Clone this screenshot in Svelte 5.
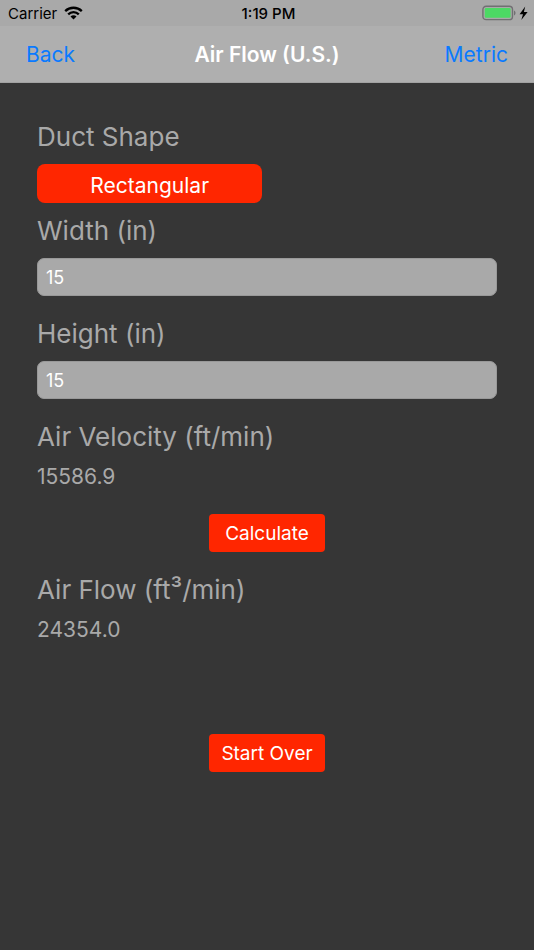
<script>
    const shapes = ['Rectangular', 'Circular'];

    let shape = 'Rectangular';
    let width = '15';
    let height = '15';
    let velocity = '15586.9';
    let flow = '24354.0';

    function toggleShape() {
        shape = shapes[(shapes.indexOf(shape) + 1) % shapes.length];
    }

    function calculate() {
        let area = (Number(width) * Number(height)) / 144;
        if (shape === 'Circular') {
            area = area * Math.PI / 4;
        }
        flow = (Number(velocity) * area).toFixed(1);
    }

    function startOver() {
        shape = shapes[0];
        width = '';
        height = '';
        velocity = '0.0';
        flow = '0.0';
    }
</script>

<div class="screen">
    <header>
        <div class="status">
            <div class="carrier">
                <span>Carrier</span>
                <svg width="19" height="14" viewBox="0 0 19 14" aria-hidden="true">
                    <g fill="none" stroke="#000" stroke-width="2.3">
                        <path d="M1.2 5.1C5.8 .6 13.2 .6 17.8 5.1" />
                        <path d="M4.2 8.3C7.2 5.4 11.8 5.4 14.8 8.3" />
                    </g>
                    <path d="M6.5 10.4C8.2 8.9 10.8 8.9 12.5 10.4L9.5 13.4Z" />
                </svg>
            </div>
            <span class="time">1:19 PM</span>
            <div class="battery">
                <svg width="47" height="16" viewBox="0 0 47 16" aria-hidden="true">
                    <rect x=".9" y="1.2" width="29.6" height="13.4" rx="3.2" fill="none" stroke="#707072" stroke-width="1.4" />
                    <rect x="2.8" y="3.1" width="25.8" height="9.6" rx="1.2" fill="#4cd964" />
                    <path d="M32 5.5C34 6.2 34 9.8 32 10.5Z" fill="#707072" />
                    <path d="M43.2 1.4L37.6 9.2H41L39.3 15L45.6 7H41.9Z" fill="#000" />
                </svg>
            </div>
        </div>
        <nav>
            <a href="#back">Back</a>
            <h1>Air Flow (U.S.)</h1>
            <a href="#metric" class="right">Metric</a>
        </nav>
    </header>

    <main>
        <div class="group">
            <span class="label" id="shape-label">Duct Shape</span>
            <button class="shape" aria-describedby="shape-label" on:click={toggleShape}>{shape}</button>
        </div>
        <div class="group field">
            <label class="label" for="width">Width (in)</label>
            <input id="width" type="text" inputmode="decimal" bind:value={width} />
        </div>
        <div class="group field">
            <label class="label" for="height">Height (in)</label>
            <input id="height" type="text" inputmode="decimal" bind:value={height} />
        </div>
        <div class="group result">
            <span class="label">Air Velocity (ft/min)</span>
            <output>{velocity}</output>
        </div>
        <button class="action" on:click={calculate}>Calculate</button>
        <div class="group result">
            <span class="label">Air Flow (ft³/min)</span>
            <output>{flow}</output>
        </div>
        <button class="action reset" on:click={startOver}>Start Over</button>
    </main>
</div>

<style>
    :global(body) {
        margin: 0;
        background: #363636;
    }
    .screen {
        min-height: 100vh;
        background: #363636;
        color: #a9a9a9;
        font-family: Inter, "Liberation Sans", sans-serif;
    }
    header {
        background: #afafaf;
        border-bottom: 1px solid #a2a2a2;
    }
    .status {
        display: grid;
        grid-template-columns: 1fr auto 1fr;
        align-items: center;
        height: 26px;
        padding: 0 5px 0 8px;
        background: #a9a9a9;
        color: #000;
        font-size: 15px;
    }
    .carrier {
        display: flex;
        align-items: center;
        gap: 7px;
    }
    .time {
        font-weight: 500;
    }
    .battery {
        display: flex;
        justify-content: flex-end;
    }
    nav {
        display: grid;
        grid-template-columns: 1fr auto 1fr;
        align-items: center;
        height: 56px;
        padding: 0 26px;
        font-size: 21px;
    }
    h1 {
        margin: 0;
        color: #fff;
        font-size: 21px;
        font-weight: 600;
    }
    a {
        color: #0a7aff;
        text-decoration: none;
    }
    .right {
        text-align: right;
    }
    main {
        display: flex;
        flex-direction: column;
        padding: 36px 37px;
    }
    .group {
        display: flex;
        flex-direction: column;
        gap: 9px;
    }
    .field {
        margin: 10px 0;
    }
    .label {
        font-size: 26px;
        line-height: 36px;
    }
    button {
        height: 38px;
        border: 0;
        background: #ff2600;
        color: #fff;
        font-family: inherit;
        font-size: 19px;
        cursor: pointer;
    }
    .shape {
        width: 49%;
        height: 39px;
        padding: 4px 0 0;
        border-radius: 8px;
        font-size: 21px;
    }
    input {
        box-sizing: border-box;
        width: 100%;
        height: 38px;
        padding: 0 8px;
        border: 1px solid #999;
        border-radius: 7px;
        background: #a9a9a9;
        color: #fff;
        font-family: inherit;
        font-size: 18px;
    }
    .result {
        gap: 8px;
        margin-top: 10px;
    }
    output {
        font-size: 21px;
        line-height: 28px;
    }
    .action {
        align-self: center;
        width: 116px;
        margin: 23px 0 10px;
        padding: 0;
        border-radius: 4px;
    }
    .reset {
        margin-top: 90px;
    }
</style>
